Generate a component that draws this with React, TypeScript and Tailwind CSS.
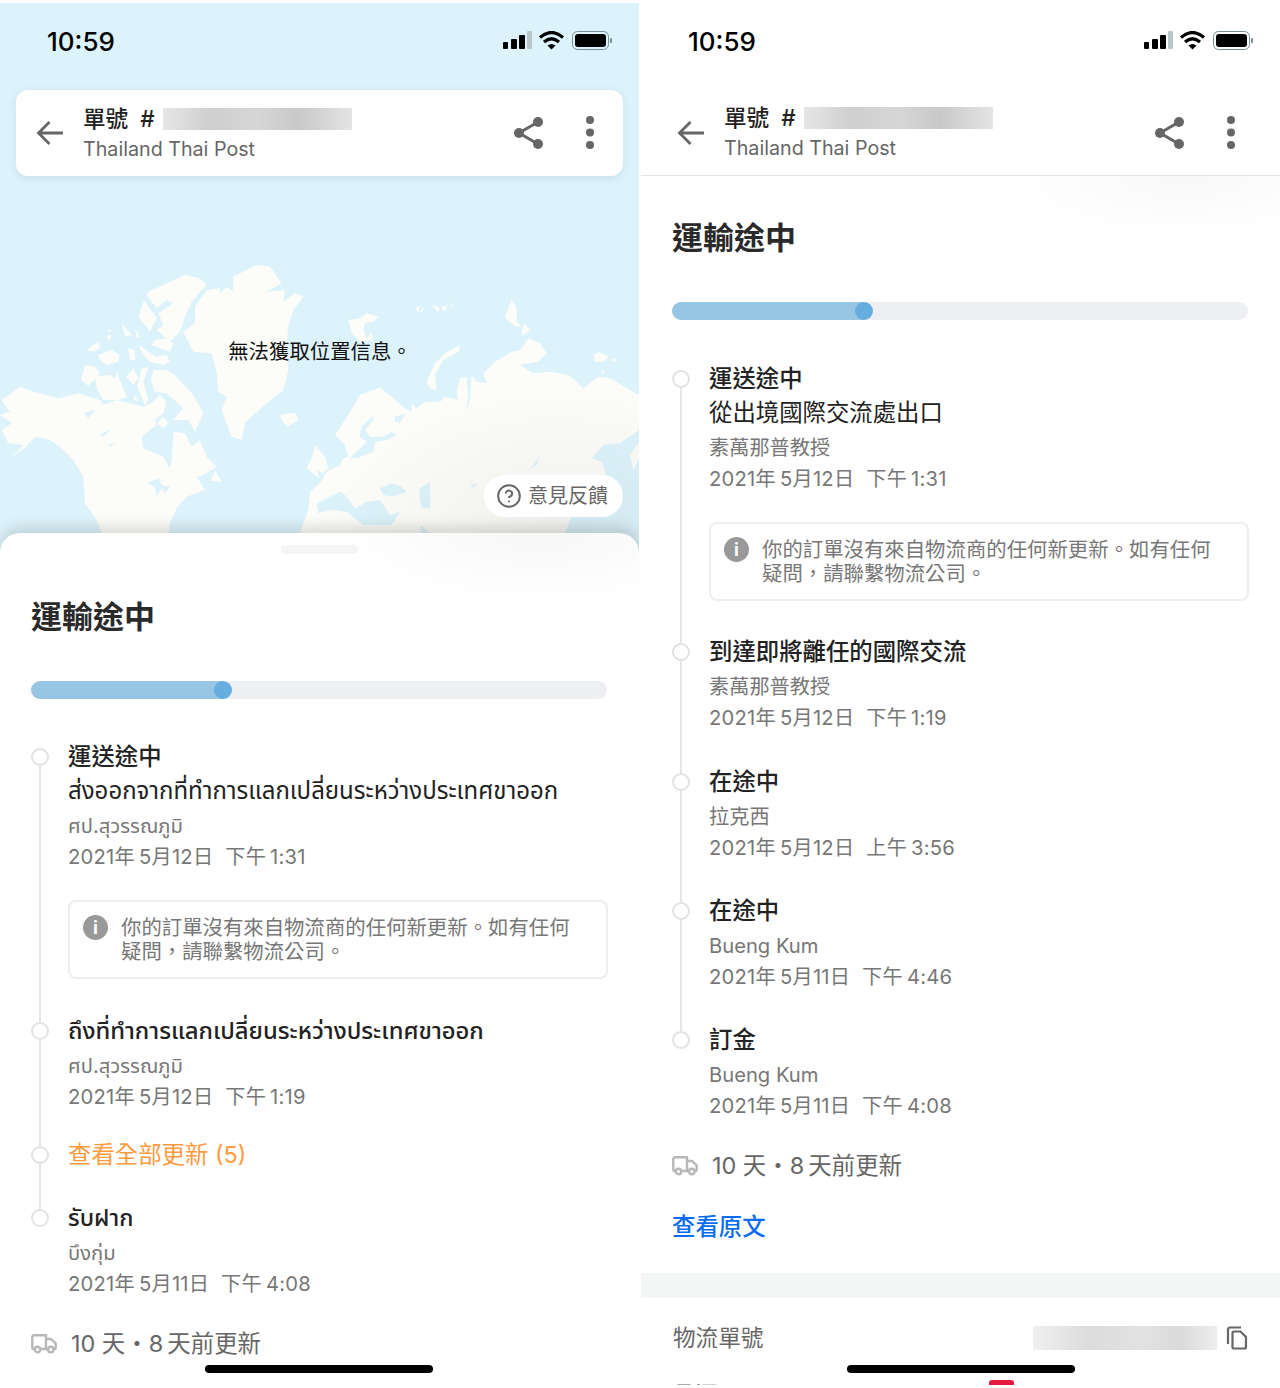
import { CircleHelp } from "lucide-react";

const StatusBar = () => (
  <div className="flex h-[76px] items-center justify-between pl-[47px] pr-[26px]">
    <span className="mt-[1px] text-[26px] font-medium leading-none text-black">10:59</span>
    <svg width="110" height="20" viewBox="0 0 110 20">
      <rect x="0" y="11" width="5" height="7" rx="1" fill="#000" />
      <rect x="8" y="8" width="6" height="10" rx="1" fill="#000" />
      <rect x="16" y="4" width="6" height="14" rx="1" fill="#000" />
      <rect x="24" y="0" width="5" height="18" rx="1" fill="#b9c6ca" />
      <path d="M37 6.5Q48.5 -3.5 60 6.5" fill="none" stroke="#000" strokeWidth="3.2" />
      <path d="M41 11Q48.5 4.5 56 11" fill="none" stroke="#000" strokeWidth="3.2" />
      <path d="M44.5 14.5Q48.5 11.5 52.5 14.5L48.5 18.5Z" fill="#000" />
      <rect x="69.5" y="0.5" width="36" height="18" rx="5" fill="none" stroke="#7b8c94" />
      <rect x="72" y="3" width="31" height="13" rx="3" fill="#000" />
      <rect x="107" y="7" width="2" height="5" rx="1" fill="#7b8c94" />
    </svg>
  </div>
);

const HeaderContent = () => (
  <>
    <svg width="28" height="28" viewBox="0 0 28 28" className="ml-[20px] shrink-0">
      <path d="M27 14H3M13.5 3L2.5 14L13.5 25" fill="none" stroke="#666" strokeWidth="2.8" />
    </svg>
    <div className="ml-[19px] flex-1">
      <div className="flex items-center">
        <span className="text-[22.6px] font-medium leading-[30px] text-[#222] [word-spacing:6px]">單號 #</span>
        <div className="ml-[8px] h-[22px] w-[189px] bg-[linear-gradient(90deg,#e6e6e6,#cfcfcf_25%,#d6d6d6_50%,#c9c9c9_72%,#e4e4e4)]" />
      </div>
      <div className="mt-[1px] text-[19.7px] leading-[28px] text-[#666]">Thailand Thai Post</div>
    </div>
    <svg width="32" height="34" viewBox="0 0 32 34" className="shrink-0">
      <path d="M24 6L5 17L24 28" fill="none" stroke="#666" strokeWidth="3" />
      <circle cx="5" cy="17" r="5" fill="#666" />
      <circle cx="24" cy="6" r="5" fill="#666" />
      <circle cx="24" cy="28" r="5" fill="#666" />
    </svg>
    <svg width="10" height="36" viewBox="0 0 10 36" className="ml-[39px] mr-[28px] shrink-0">
      <circle cx="5" cy="5" r="4" fill="#666" />
      <circle cx="5" cy="17.5" r="4" fill="#666" />
      <circle cx="5" cy="30" r="4" fill="#666" />
    </svg>
  </>
);

const WorldMap = () => (
  <svg viewBox="0 0 1917 831" className="absolute left-0 top-[257px] h-[277px] w-[639px]">
    <g fill="#fcfcf8">
      <path d="M770 15L810 20L845 70L800 95L855 90L850 125L885 100L910 110L880 150L865 195L860 260L865 330L850 390L800 430L760 465L735 490L725 540L695 530L665 450L680 410L655 395L650 340L635 280L580 275L550 215L585 190L585 140L620 90L660 85L660 100L680 80L700 95L700 50Z" />
      <path d="M445 95L500 70L555 45L600 55L620 75L575 125L555 170L540 215L510 245L470 210L490 195L475 160L520 130L500 120L470 145L440 105Z" />
      <path d="M432 120L470 175L450 215L415 170Z" />
      <path d="M365 190L395 225L375 230Z" />
      <path d="M405 205L420 230L410 235Z" />
      <path d="M322 208L335 212L325 218Z" />
      <path d="M318 228L335 225L330 242Z" />
      <path d="M465 240L495 235L520 250L510 275L480 265L455 255Z" />
      <path d="M385 265L405 270L405 300L390 300Z" />
      <path d="M415 255L440 270L465 290L500 285L510 305L490 315L450 305L430 285Z" />
      <path d="M260 270L295 245L300 265L280 275Z" />
      <path d="M295 285L335 270L360 285L355 305L320 315L300 300Z" />
      <path d="M255 315L285 320L300 340L265 378L243 360Z" />
      <path d="M285 350L325 345L345 355L350 335L380 410L360 420L310 420L290 385Z" />
      <path d="M378 350L400 325L415 355L400 375Z" />
      <path d="M425 325L445 322L430 365L445 420L435 435L412 380Z" />
      <path d="M460 330L500 330L525 345L580 405L610 460L585 515L565 480L520 480L550 445L500 400L465 395L452 360Z" />
      <path d="M405 405L415 425L400 420Z" />
      <path d="M5 420L60 380L100 395L175 415L235 400L300 420L310 435L350 420L410 435L430 440L460 425L480 405L500 425L490 460L465 480L470 495L425 530L430 565L490 590L510 625L515 600L520 515L555 520L575 560L600 540L620 590L650 620L610 645L570 660L590 650L615 690L560 710L530 745L510 790L505 831L310 831L290 780L255 730L250 650L220 600L180 560L150 540L110 530L90 545L80 560L35 590L70 555L25 550L5 510L35 490L0 465L30 455Z" />
      <path d="M470 490L490 470L505 490L490 505Z" />
      <path d="M645 630L665 665L632 662Z" />
      <path d="M840 465L885 458L895 480L865 498L850 490Z" />
      <path d="M945 555L975 590L985 625L970 640L950 630L958 655L920 625L935 595Z" />
    </g>
    <g fill="#ddf3fb">
      <path d="M440 670L475 655L485 675L510 680L495 700L485 685L470 710L465 680Z" />
      <path d="M250 460L285 450L265 475Z" />
      <path d="M300 525L335 505L310 530Z" />
      <path d="M325 555L350 545L330 560Z" />
    </g>
    <g transform="translate(960 105)">
      <g fill="#fcfcf8">
        <path d="M85 75L120 70L140 55L175 65L160 80L135 85L130 105L140 130L155 115L160 135L120 140L95 115Z" />
        <path d="M285 40L300 32L295 50Z" />
        <path d="M300 50L315 32L305 52Z" />
        <path d="M335 28L360 38L355 52Z" />
        <path d="M365 38L380 30L378 45L368 48Z" />
        <path d="M390 30L398 20L395 35Z" />
        <path d="M555 65L575 15L590 40L590 80L605 95L590 95L560 75Z" />
        <path d="M610 85L632 105L605 122Z" />
        <path d="M320 260L345 205L375 175L420 150L415 170L370 195L345 240L350 285L330 280Z" />
        <path d="M820 180L835 170L865 185L850 200L825 200Z" />
        <path d="M875 190L895 195L880 200Z" />
        <path d="M845 225L855 230L845 235Z" />
        <path d="M957 300L870 250L835 245L790 280L770 260L745 240L690 230L640 235L600 210L655 200L680 175L660 145L625 130L600 165L575 170L525 200L490 235L500 265L470 260L455 240L450 310L440 350L445 300L440 245L420 250L410 290L415 315L375 305L360 320L315 320L290 340L275 325L275 350L255 340L220 310L180 278L120 300L85 360L45 420L75 450L85 485L70 490L60 510L20 530L0 565L-30 590L-35 645L-65 726L730 726L760 650L860 540L845 500L815 490L850 450L900 445L950 410L957 405Z" />
        <path d="M930 480L957 440L957 490L940 525Z" />
      </g>
      <g fill="#ddf3fb">
        <path d="M160 362L125 395L118 425L140 440L90 490L110 490L160 470L165 440L200 435L230 420L215 410L190 425L150 425L135 405L160 375Z" />
        <path d="M225 365L255 355L240 385L225 380Z" />
        <path d="M180 580L215 565L245 575L260 590L220 605L190 600Z" />
        <path d="M300 580L330 562L330 600L330 640L305 640L298 600Z" />
        <path d="M450 570L475 565L460 578Z" />
        <path d="M630 520L660 485L650 510Z" />
        <path d="M-10 625L60 590L75 600L105 640L125 630L140 620L180 615L210 660L240 650L215 690L130 690L80 650L30 645L-5 655Z" />
        <path d="M300 690L330 715L305 720Z" />
      </g>
    </g>
  </svg>
);

const Dot = () => (
  <span className="absolute left-[-37px] top-[8px] size-[18px] rounded-full border-2 border-[#e2e2e2] bg-white" />
);

const Stop = ({
  title,
  extra,
  place,
  time,
  thai,
  className,
}: {
  title: string;
  extra?: string;
  place: string;
  time: string;
  thai?: boolean;
  className?: string;
}) => (
  <div className={`relative ${className ?? ""}`}>
    <Dot />
    <div className={`font-medium leading-[34px] text-[#222] ${thai ? "text-[23.8px]" : "text-[23.4px]"}`}>{title}</div>
    {extra && <div className={`leading-[34px] text-[#222] ${thai ? "text-[24px]" : "text-[23.4px]"}`}>{extra}</div>}
    <div className="mt-[2px] text-[20.2px] leading-[31px] text-[#777]">{place}</div>
    <div className="whitespace-pre text-[20.2px] leading-[31px] tracking-[0.25px] text-[#777]">{time}</div>
  </div>
);

const Notice = () => (
  <div className="mt-[28px] flex h-[79px] rounded-[8px] border-2 border-[#eeeeee] pl-[13px] pr-[20px] pt-[14px]">
    <span className="-mt-[1px] flex size-[25px] shrink-0 items-center justify-center rounded-full bg-[#999] text-[18px] font-bold leading-none text-white">
      i
    </span>
    <p className="ml-[13px] whitespace-nowrap text-[20.4px] leading-[24px] text-[#777]">
      你的訂單沒有來自物流商的任何新更新。如有任何
      <br />
      {"疑問\uFF0C請聯繫物流公司。"}
    </p>
  </div>
);

const Progress = () => (
  <div className="flex h-[18px] w-[576px] rounded-full bg-[#eeeff2]">
    <div className="h-full w-[192px] rounded-l-full bg-[#97c5e4]" />
    <div className="-ml-[9px] size-[18px] rounded-full bg-[#66ade0]" />
  </div>
);

const Eta = () => (
  <div className="flex items-center">
    <svg width="26" height="20" viewBox="0 0 26 20" fill="none" stroke="#b8b8b8" strokeWidth="2.4">
      <path d="M4 15H2.8A1.5 1.5 0 0 1 1.3 13.5V2.8A1.5 1.5 0 0 1 2.8 1.3H15V15H9" />
      <path d="M15 5H20L24.7 9.5V13.5A1.5 1.5 0 0 1 23.2 15H22.5M15 15H17" />
      <circle cx="6.5" cy="15.5" r="2.7" />
      <circle cx="19.8" cy="15.5" r="2.7" />
    </svg>
    <span className="ml-[14px] text-[23.4px] leading-[34px] text-[#666]">{"10 天・8\u2009天前更新"}</span>
  </div>
);

const HomeBar = ({ className }: { className: string }) => (
  <div className={`absolute bottom-[12px] h-[8px] w-[228px] rounded-full bg-black ${className}`} />
);

export default function App() {
  return (
    <div className="h-[1388px] w-[1280px] overflow-hidden bg-white pt-[3px] font-['Inter','Noto_Sans_Thai','Noto_Sans_CJK_TC','Noto_Sans',sans-serif]">
      <div className="flex h-[1382px] overflow-hidden">
        <div className="relative w-[639px] overflow-hidden">
          <div className="relative h-[550px] bg-[#ddf3fb]">
            <WorldMap />
            <div className="absolute inset-0 bg-[radial-gradient(ellipse_260px_170px_at_560px_545px,rgba(0,0,0,0.05),transparent)]" />
            <div className="relative">
              <StatusBar />
              <div className="mx-[16px] mt-[11px] flex h-[86px] items-center rounded-[12px] bg-white shadow-[0_2px_8px_rgba(0,60,90,0.1)]">
                <HeaderContent />
              </div>
              <div className="mt-[162px] text-center text-[20.4px] leading-[28px] text-[#111] [text-indent:1px]">
                無法獲取位置信息。
              </div>
              <div className="mr-[16px] mt-[109px] ml-auto flex h-[42px] w-[139px] items-center rounded-full bg-white pl-[12px]">
                <CircleHelp size={26} strokeWidth={1.8} color="#666" />
                <span className="ml-[6px] text-[20px] leading-none text-[#666]">意見反饋</span>
              </div>
            </div>
          </div>
          <div className="relative -mt-[20px] h-[860px] rounded-t-[20px] bg-white bg-[radial-gradient(ellipse_200px_70px_at_540px_0px,#f7f7f7,transparent)] px-[31px] pt-[12px] shadow-[0_-6px_14px_rgba(0,0,0,0.14)]">
            <div className="mx-auto h-[9px] w-[77px] rounded-full bg-[#f5f5f5]" />
            <h1 className="mt-[41px] text-[31px] font-bold leading-[44px] text-[#2a2a2a]">運輸途中</h1>
            <div className="mt-[42px]">
              <Progress />
            </div>
            <div className="relative mt-[41px] pl-[37px]">
              <div className="absolute bottom-[90px] left-[8px] top-[17px] w-[2px] bg-[#e5e5e5]" />
              <Stop
                thai
                title="運送途中"
                extra="ส่งออกจากที่ทำการแลกเปลี่ยนระหว่างประเทศขาออก"
                place="ศป.สุวรรณภูมิ"
                time={"2021年\u20095月12日  下午\u20091:31"}
                className="[&>div:first-of-type]:text-[23.4px]"
              />
              <Notice />
              <Stop
                thai
                className="mt-[35px]"
                title="ถึงที่ทำการแลกเปลี่ยนระหว่างประเทศขาออก"
                place="ศป.สุวรรณภูมิ"
                time={"2021年\u20095月12日  下午\u20091:19"}
              />
              <div className="relative mt-[26px]">
                <Dot />
                <div className="text-[23.4px] leading-[34px] text-[#ff9a3e]">查看全部更新 (5)</div>
              </div>
              <Stop
                className="mt-[29px]"
                title="รับฝาก"
                place="บึงกุ่ม"
                time={"2021年\u20095月11日  下午\u20094:08"}
              />
            </div>
            <div className="mt-[28px]">
              <Eta />
            </div>
          </div>
          <HomeBar className="left-[205px]" />
        </div>

        <div className="relative ml-[2px] w-[639px] overflow-hidden">
          <StatusBar />
          <div className="mt-[11px] flex h-[86px] items-center border-b border-[#e5e5e5] pl-[16px] pr-[16px]">
            <HeaderContent />
          </div>
          <div className="h-[1210px] bg-[radial-gradient(ellipse_170px_60px_at_540px_0px,#f8f8f8,transparent)] pt-[40px]">
            <div className="px-[31px]">
              <h1 className="text-[31px] font-bold leading-[44px] text-[#2a2a2a]">運輸途中</h1>
              <div className="mt-[42px]">
                <Progress />
              </div>
              <div className="relative mt-[42px] pl-[37px]">
                <div className="absolute bottom-[90px] left-[8px] top-[17px] w-[2px] bg-[#e5e5e5]" />
                <Stop
                  title="運送途中"
                  extra="從出境國際交流處出口"
                  place="素萬那普教授"
                  time={"2021年\u20095月12日  下午\u20091:31"}
                />
                <Notice />
                <Stop
                  className="mt-[34px]"
                  title="到達即將離任的國際交流"
                  place="素萬那普教授"
                  time={"2021年\u20095月12日  下午\u20091:19"}
                />
                <Stop
                  className="mt-[32px]"
                  title="在途中"
                  place="拉克西"
                  time={"2021年\u20095月12日  上午\u20093:56"}
                />
                <Stop
                  className="mt-[31px]"
                  title="在途中"
                  place="Bueng Kum"
                  time={"2021年\u20095月11日  下午\u20094:46"}
                />
                <Stop
                  className="mt-[31px]"
                  title="訂金"
                  place="Bueng Kum"
                  time={"2021年\u20095月11日  下午\u20094:08"}
                />
              </div>
              <div className="mt-[28px]">
                <Eta />
              </div>
              <div className="mt-[26px] text-[23.4px] font-medium leading-[36px] text-[#0a6cf0]">查看原文</div>
            </div>
            <div className="mt-[28px] h-[25px] bg-[#f4f6f6]" />
            <div className="mt-[25px] flex h-[30px] items-center pl-[32px] pr-[32px]">
              <span className="text-[22.6px] leading-[30px] text-[#666]">物流單號</span>
              <div className="ml-auto h-[24px] w-[184px] bg-[linear-gradient(90deg,#f0f0f0,#dcdcdc_30%,#e2e2e2_60%,#dadada_80%,#eeeeee)]" />
              <svg width="22" height="24" viewBox="0 0 22 24" fill="none" stroke="#666" strokeWidth="2.2" className="ml-[9px]">
                <path d="M15 1.5H4A2 2 0 0 0 2 3.5V18" />
                <path d="M8 5.5H14.5L20 11V21A1.5 1.5 0 0 1 18.5 22.5H8A1.5 1.5 0 0 1 6.5 21V7A1.5 1.5 0 0 1 8 5.5Z" />
              </svg>
            </div>
            <div className="mt-[27px] flex items-start pl-[32px] pr-[45px]">
              <span className="text-[22.6px] leading-[30px] text-[#666]">承運</span>
              <div className="ml-auto flex items-start">
                <div className="h-[24px] w-[25px] rounded-[3px] bg-[#e6193f]" />
                <span className="ml-[24px] text-[22.6px] leading-[30px] text-[#666]">Thailand Thai Post</span>
              </div>
            </div>
          </div>
          <HomeBar className="left-[206px]" />
        </div>
      </div>
    </div>
  );
}
